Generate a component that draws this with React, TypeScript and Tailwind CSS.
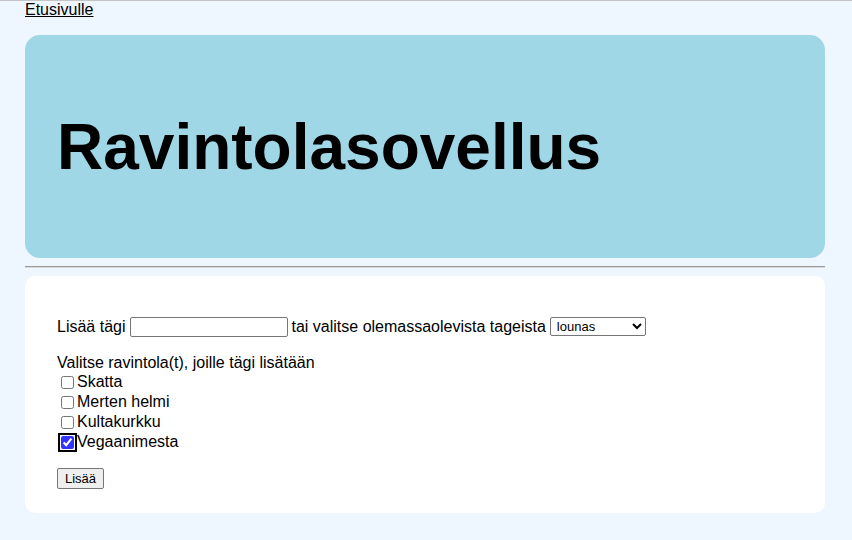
const restaurants = [
  { name: 'Skatta', checked: false },
  { name: 'Merten helmi', checked: false },
  { name: 'Kultakurkku', checked: false },
  { name: 'Vegaanimesta', checked: true },
]

export default function App() {
  return (
    <div className="min-h-[540px] bg-[#eef6ff] border-t border-[#c4c4c4] pl-[25px] pr-[27px] pb-[27px] font-['Liberation_Sans',Arial,sans-serif] text-base text-black">
      <a href="#" className="block underline leading-[18px] w-fit">
        Etusivulle
      </a>

      <header className="mt-4 h-[223px] bg-[#a0d7e6] rounded-[15px] px-8 flex items-center">
        <h1 className="text-[64px] font-bold leading-[74px]">Ravintolasovellus</h1>
      </header>

      <hr className="my-2 border-0 border-t border-b border-t-[#9a9a9a] border-b-[#d8d8d8]" />

      <main className="bg-white rounded-[10px] px-8 pt-[40px] pb-[23px]">
        <div className="flex items-center h-[21px] gap-[4px]">
          <span>Lisää tägi</span>
          <input
            type="text"
            className="w-[158px] h-[20px] border border-[#767676] rounded-[2px] px-1 text-[13px]"
          />
          <span>tai valitse olemassaolevista tageista</span>
          <select
            defaultValue="lounas"
            className="w-[96px] h-[19px] border border-[#767676] rounded-[2px] text-[13px] bg-white pl-[2px]"
          >
            <option value="lounas">lounas</option>
            <option value="illallinen">illallinen</option>
          </select>
        </div>

        <p className="mt-[17px] leading-[18px]">Valitse ravintola(t), joille tägi lisätään</p>
        <div className="flex flex-col">
          {restaurants.map((r, i) => (
            <label key={i} className="flex items-center h-[20px]">
              <input
                type="checkbox"
                defaultChecked={r.checked}
                className={
                  r.checked
                    ? 'w-[13px] h-[13px] ml-[4px] mr-[3px] accent-[#3333ff] outline-2 outline-black outline-offset-1 rounded-[2px]'
                    : 'w-[13px] h-[13px] ml-[4px] mr-[3px]'
                }
              />
              <span>{r.name}</span>
            </label>
          ))}
        </div>

        <button className="mt-[16px] h-[21px] px-[7px] text-[13px] bg-[#efefef] border border-[#767676] rounded-[2px]">
          Lisää
        </button>
      </main>
    </div>
  )
}
